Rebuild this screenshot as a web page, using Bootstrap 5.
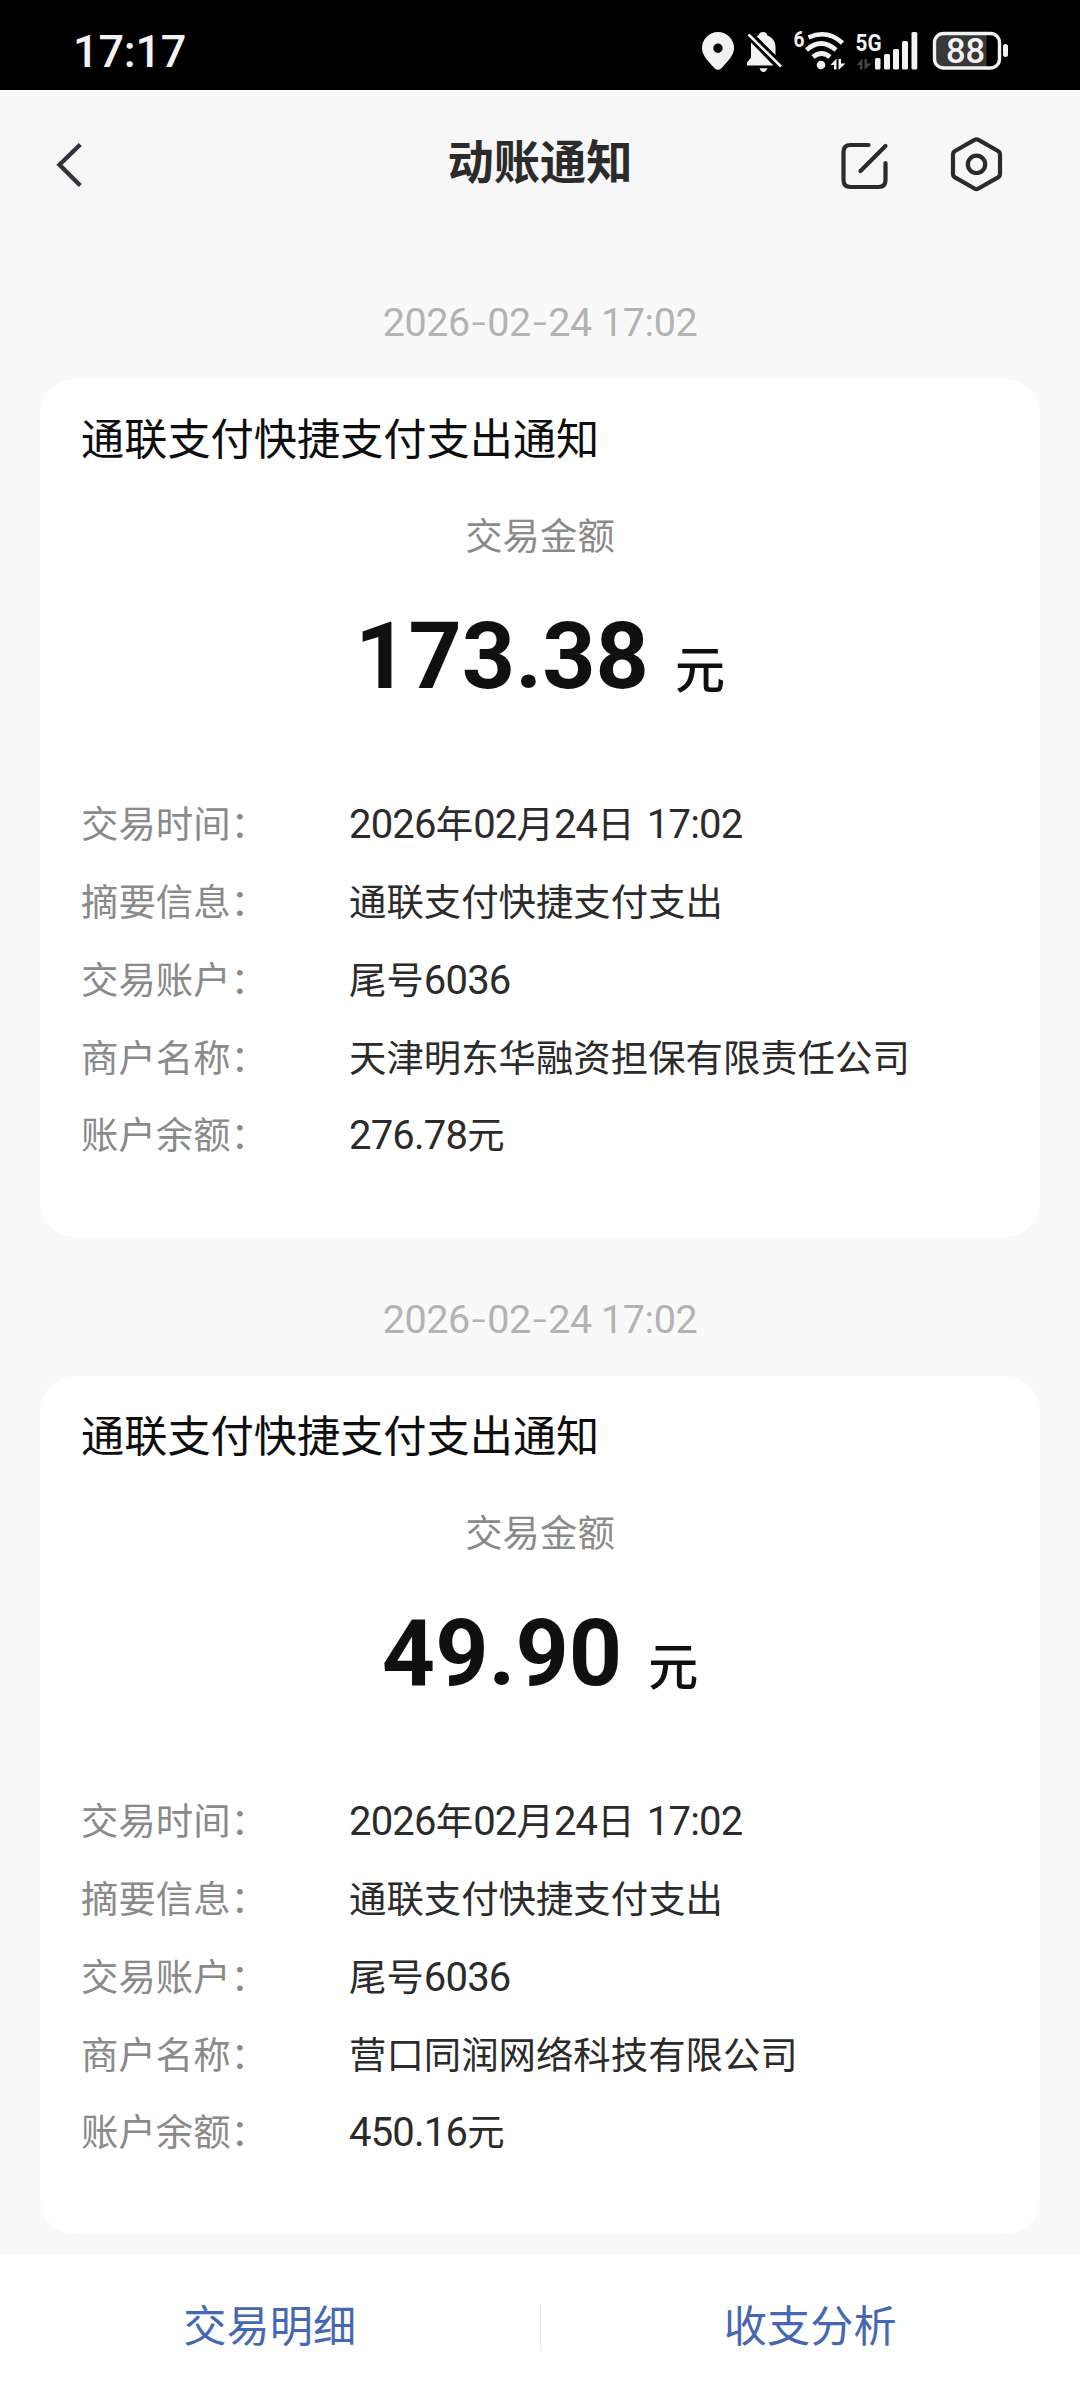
<!DOCTYPE html>
<html lang="zh-CN">
<head>
<meta charset="utf-8">
<meta name="viewport" content="width=device-width, initial-scale=1">
<title>动账通知</title>
<link href="https://cdn.jsdelivr.net/npm/bootstrap@5.3.0/dist/css/bootstrap.min.css" rel="stylesheet">
<style>
  body { font-family: Roboto, "Noto Sans CJK SC", sans-serif; background: #f9f9f9; color: #2b2b2b; height: 2400px; overflow: hidden; }
  .status-bar { height: 90px; background: #000; color: #f2f2f2; padding: 0 71px 0 73px; }
  .clock { font-size: 45px; font-weight: 500; line-height: 50px; letter-spacing: -.2px; padding-top: 13px; }
  .app-bar { height: 150px; background: #f7f7f7; box-shadow: inset 0 3px #fafafa; padding: 0 74px 0 53px; }
  .app-bar svg { margin-bottom: 2px; }
  .app-title { font-size: 46.3px; font-weight: 700; line-height: 60px; color: #2b2b2b; margin-bottom: 4px; }
  .side-start { width: 181px; }
  .side-end { width: 160px; }
  .feed { padding: 0 40px; }
  .stamp { height: 139px; padding-top: 57px; line-height: 50px; font-size: 39.5px; letter-spacing: -.45px; color: #b3b3b3; font-weight: 400; }
  .stamp i { font-family: Inter, sans-serif; font-style: normal; font-weight: 300; }
  .notice { height: 858px; border-radius: 36px; padding: 35px 41px 0; }
  .notice-title { font-size: 43.2px; line-height: 54px; color: #0e0e0e; font-weight: 400; }
  .amount-label { font-size: 37.4px; line-height: 50px; color: #8a8a8a; margin-top: 44px; }
  .amount { line-height: 100px; color: #101010; margin-top: 44.5px; white-space: nowrap; }
  .figure-num { font-size: 93px; font-weight: 700; }
  .unit { font-size: 50px; font-weight: 500; margin-left: 26px; }
  .detail { margin-top: 66px; font-size: 37.4px; }
  .detail-row { height: 77.75px; }
  .detail-key { width: 268px; color: #8a8a8a; flex: none; }
  .detail-val b { font-size: 40px; font-weight: 400; letter-spacing: -.8px; word-spacing: 3px; }
  .bottom-tabs { height: 145px; }
  .bottom-tabs a { font-size: 43.2px; line-height: 54px; color: #4668b4; }
  .divider { width: 1px; height: 47px; background: #ececec; }
</style>
<script src="https://cdn.jsdelivr.net/npm/bootstrap@5.3.0/dist/js/bootstrap.bundle.min.js"></script>
</head>
<body class="d-flex flex-column">
<header class="status-bar d-flex justify-content-between align-items-center">
  <div class="clock">17:17</div>
  <svg width="310" height="50" viewBox="700 20 310 50" fill="#f2f2f2" overflow="visible" font-family="Roboto, sans-serif">
    <path fill-rule="evenodd" d="M719 32a16 16 0 0 1 16 16c0 7-5 12-12.500 20.300q-3.500 3-7 0C708 60 703 55 703 48a16 16 0 0 1 16-16zM719 43.500a4.700 4.700 0 1 0 0 9.400a4.700 4.700 0 0 0 0-9.400z"/>
    <path d="M757.500 36.200q1-.5 2-.8q1-3.400 4.500-3.400t4.500 3.400C774 37.500 776.500 42 776.500 47v8zM752 42.500L774.500 65.500H748v-3l4-5z"/>
    <path d="M760.500 68.300h8q-1.300 3.700-4 3.700t-4-3.700z"/>
    <path d="M749.500 34.500L782 66.500" stroke="#f2f2f2" stroke-width="2.600"/>
    <text x="794.500" y="46.500" font-size="22" font-weight="700" textLength="11" lengthAdjust="spacingAndGlyphs">6</text>
    <g fill="none" stroke="#f2f2f2" stroke-width="4.600">
      <path d="M809.500 37.500Q828 29 843.500 43"/>
      <path d="M807.500 50Q822 37 837 50"/>
      <path d="M814 57Q822.500 50 831 57"/>
    </g>
    <circle cx="822" cy="65" r="4.300"/>
    <path d="M831.500 65L837.500 58.500V69.500H835V65zM839.500 59H842V63.500H846.500L839.500 70z"/>
    <text x="856.500" y="50.500" font-size="24.500" font-weight="700" textLength="26" lengthAdjust="spacingAndGlyphs">5G</text>
    <path fill="#444" d="M857.500 65L863.500 58.500V69.500H861V65zM865.500 59H868V63.500H872.500L865.500 70z"/>
    <rect x="876" y="58" width="5.500" height="11.500" rx="1.500"/>
    <rect x="885" y="54" width="6" height="15.500" rx="1.500"/>
    <rect x="894" y="49" width="6" height="20.500" rx="1.500"/>
    <rect x="903" y="41" width="6" height="28.500" rx="1.500"/>
    <rect x="912.500" y="32" width="5.800" height="37.500" rx="1.500"/>
    <path fill="#383838" d="M945 34h42.500v33H945a9 9 0 0 1-9-9V43a9 9 0 0 1 9-9z"/>
    <rect x="935.500" y="33.500" width="65" height="34.500" rx="9" fill="none" stroke="#f2f2f2" stroke-width="3.400"/>
    <rect x="1004" y="44" width="5" height="13" rx="2.500"/>
    <text x="966.500" y="63" font-size="34.500" font-weight="500" text-anchor="middle">88</text>
  </svg>
</header>

<nav class="app-bar d-flex align-items-center justify-content-between">
  <div class="side-start">
    <svg class="d-block" width="34" height="54" viewBox="53 137 34 54" fill="none" stroke="#35323c" stroke-width="4.400"><path d="M80.300 144.500L59.500 164.700L80.300 185.500"/></svg>
  </div>
  <h1 class="app-title">动账通知</h1>
  <div class="side-end d-flex justify-content-end">
    <svg class="d-block flex-shrink-0" width="168" height="54" viewBox="838 137 168 54" fill="none" stroke="#2b2b2b" stroke-width="4.200" stroke-linecap="round" stroke-linejoin="round" overflow="visible">
      <path d="M868.500 145H850.500Q843.500 145 843.500 152V180Q843.500 187 850.500 187H878.500Q885.500 187 885.500 180V163M860.500 171L885.500 146"/>
      <path d="M974.500 139.900Q976.500 138.700 978.500 139.900L998 151Q1000 152.200 1000 154.500V174Q1000 176.200 998 177.400L978.500 188.500Q976.500 189.700 974.500 188.500L955 177.400Q953 176.200 953 174V154.500Q953 152.200 955 151Z"/>
      <circle cx="976.500" cy="164.300" r="8.700"/>
    </svg>
  </div>
</nav>

<main class="feed flex-grow-1">
  <div class="stamp text-center">2026<i>-</i>02<i>-</i>24 17:02</div>
  <section class="notice card border-0">
    <h2 class="notice-title mb-0">通联支付快捷支付支出通知</h2>
    <div class="amount-label text-center">交易金额</div>
    <div class="amount d-flex justify-content-center align-items-baseline"><span class="figure-num">173.38</span><span class="unit">元</span></div>
    <div class="detail">
      <div class="detail-row d-flex align-items-center"><span class="detail-key">交易时间：</span><span class="detail-val"><b>2026</b>年<b>02</b>月<b>24</b>日<b> 17:02</b></span></div>
      <div class="detail-row d-flex align-items-center"><span class="detail-key">摘要信息：</span><span class="detail-val">通联支付快捷支付支出</span></div>
      <div class="detail-row d-flex align-items-center"><span class="detail-key">交易账户：</span><span class="detail-val">尾号<b>6036</b></span></div>
      <div class="detail-row d-flex align-items-center"><span class="detail-key">商户名称：</span><span class="detail-val">天津明东华融资担保有限责任公司</span></div>
      <div class="detail-row d-flex align-items-center"><span class="detail-key">账户余额：</span><span class="detail-val"><b>276.78</b>元</span></div>
    </div>
  </section>

  <div class="stamp text-center">2026<i>-</i>02<i>-</i>24 17:02</div>
  <section class="notice card border-0">
    <h2 class="notice-title mb-0">通联支付快捷支付支出通知</h2>
    <div class="amount-label text-center">交易金额</div>
    <div class="amount d-flex justify-content-center align-items-baseline"><span class="figure-num">49.90</span><span class="unit">元</span></div>
    <div class="detail">
      <div class="detail-row d-flex align-items-center"><span class="detail-key">交易时间：</span><span class="detail-val"><b>2026</b>年<b>02</b>月<b>24</b>日<b> 17:02</b></span></div>
      <div class="detail-row d-flex align-items-center"><span class="detail-key">摘要信息：</span><span class="detail-val">通联支付快捷支付支出</span></div>
      <div class="detail-row d-flex align-items-center"><span class="detail-key">交易账户：</span><span class="detail-val">尾号<b>6036</b></span></div>
      <div class="detail-row d-flex align-items-center"><span class="detail-key">商户名称：</span><span class="detail-val">营口同润网络科技有限公司</span></div>
      <div class="detail-row d-flex align-items-center"><span class="detail-key">账户余额：</span><span class="detail-val"><b>450.16</b>元</span></div>
    </div>
  </section>
</main>

<footer class="bottom-tabs bg-white d-flex align-items-center flex-shrink-0">
  <a href="#" class="flex-fill w-50 text-center text-decoration-none">交易明细</a>
  <div class="divider flex-shrink-0"></div>
  <a href="#" class="flex-fill w-50 text-center text-decoration-none">收支分析</a>
</footer>
</body>
</html>
